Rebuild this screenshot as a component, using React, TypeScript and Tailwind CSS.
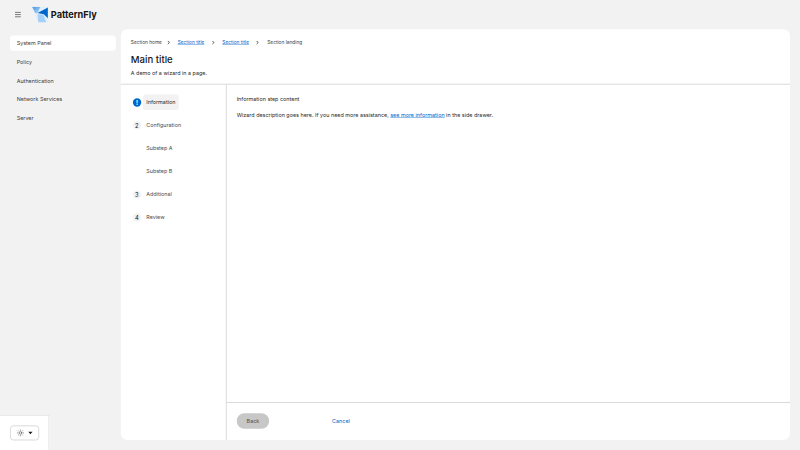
import { ChevronRight, Menu, Sun } from "lucide-react";

const NAV = ["System Panel", "Policy", "Authentication", "Network Services", "Server"];

const STEPS = [
  { num: "!", label: "Information", current: true },
  { num: "2", label: "Configuration" },
  { label: "Substep A" },
  { label: "Substep B" },
  { num: "3", label: "Additional" },
  { num: "4", label: "Review" },
];

function Logo() {
  return (
    <svg width="38" height="38" viewBox="0 0 38 38" className="shrink-0">
      <defs>
        <linearGradient id="pf-a" x1="0" y1="0" x2="1" y2="1">
          <stop offset="0" stopColor="#4394e5" />
          <stop offset="1" stopColor="#b9dafc" />
        </linearGradient>
      </defs>
      <path d="M0 0H38V38H14Z" fill="#e0f0ff" />
      <path d="M0 0H20L13 16H8Z" fill="url(#pf-a)" />
      <path d="M13 15L38 2V28L28 18Z" fill="#0066cc" />
      <path d="M13 18L27 19L34 38H15Z" fill="#a6d0f7" />
    </svg>
  );
}

function Step({ num, label, current }: { num?: string; label: string; current?: boolean }) {
  return (
    <div className="flex items-center h-[37px]">
      <div className="w-[29px] flex justify-center">
        {num &&
          (current ? (
            <span className="w-[20px] h-[20px] rounded-full bg-[#0066cc] text-white text-sm font-bold flex items-center justify-center leading-none">
              !
            </span>
          ) : (
            <span className="w-[20px] h-[20px] rounded-full bg-[#f2f2f2] text-[#151515] text-sm flex items-center justify-center leading-none">
              {num}
            </span>
          ))}
      </div>
      <span
        className={`h-[37px] flex items-center px-2 rounded-[6px] text-[13px] ${
          current ? "bg-[#f2f2f2] text-[#292929]" : "text-[#4d4d4d]"
        }`}
      >
        {label}
      </span>
    </div>
  );
}

export default function App() {
  return (
    <div className="w-[800px] h-[450px] overflow-hidden">
      <div className="w-[1920px] h-[1080px] origin-top-left scale-[0.416667] relative bg-[#f2f2f2] text-[#292929] font-['Inter',sans-serif] flex flex-col">
        <header className="h-[70px] shrink-0 flex items-center">
          <Menu size={18} strokeWidth={2} className="ml-[34px] text-[#333]" />
          <div className="ml-[25px] flex items-center gap-[7px]">
            <Logo />
            <span className="text-[22px] font-bold text-[#151515]">PatternFly</span>
          </div>
        </header>

        <div className="flex-1 flex min-h-0 pb-6 pr-6">
          <nav className="w-[290px] shrink-0 pl-6 pr-3 pt-[15px] flex flex-col gap-2">
            {NAV.map((item, i) => (
              <div
                key={item}
                className={`h-[37px] flex items-center px-4 rounded-lg text-[13px] text-[#3d3d3d] ${
                  i === 0 ? "bg-white" : ""
                }`}
              >
                {item}
              </div>
            ))}
          </nav>

          <main className="flex-1 bg-white rounded-2xl flex flex-col min-w-0">
            <div className="h-[133px] shrink-0 border-b-2 border-[#d2d2d2] px-6 pt-[24px]">
              <div className="flex items-center text-[11.5px] h-4 text-[#3d3d3d]">
                <span>Section home</span>
                <ChevronRight size={12} strokeWidth={3.5} className="ml-[10px] mr-4 text-[#151515]" />
                <span className="text-[#0066cc] underline">Section title</span>
                <ChevronRight size={12} strokeWidth={3.5} className="ml-[15px] mr-4 text-[#151515]" />
                <span className="text-[#0066cc] underline">Section title</span>
                <ChevronRight size={12} strokeWidth={3.5} className="ml-[15px] mr-[17px] text-[#151515]" />
                <span>Section landing</span>
              </div>
              <h1 className="text-[23px] font-medium leading-[30px] mt-[18px] text-[#151515]">Main title</h1>
              <p className="text-[13px] leading-[21px] mt-[6px]">A demo of a wizard in a page.</p>
            </div>

            <div className="flex-1 flex min-h-0">
              <aside className="w-[254px] shrink-0 border-r-2 border-[#d2d2d2] pl-6 pt-6 flex flex-col gap-[18.3px]">
                {STEPS.map((s) => (
                  <Step key={s.label} {...s} />
                ))}
              </aside>

              <div className="flex-1 flex flex-col min-w-0">
                <div className="flex-1 pl-6 pt-[25px] text-[13px]">
                  <p className="leading-[21px]">Information step content</p>
                  <p className="leading-[21px] mt-4">
                    Wizard description goes here. If you need more assistance,{" "}
                    <span className="text-[#0066cc] underline">see more information</span> in the side drawer.
                  </p>
                </div>
                <div className="h-[91px] shrink-0 border-t-2 border-[#d2d2d2] flex items-center pl-6 pb-[2px]">
                  <button type="button" className="w-[78px] h-[37px] rounded-full bg-[#c7c7c7] text-[13px] text-[#4d4d4d]">
                    Back
                  </button>
                  <span className="ml-[151px] text-[13px] text-[#0066cc]">Cancel</span>
                </div>
              </div>
            </div>
          </main>
        </div>

        <div className="absolute left-0 bottom-0 w-[118px] h-[84px] bg-white border-r-2 border-t-2 border-[#e6e6e6] flex items-center pl-6">
          <div className="w-[70px] h-[36px] rounded-lg border-2 border-[#d2d2d2] flex items-center pl-[14px] gap-[10px]">
            <Sun size={18} className="text-[#555]" />
            <span className="w-0 h-0 border-x-[5px] border-x-transparent border-t-[6px] border-t-[#151515]" />
          </div>
        </div>
      </div>
    </div>
  );
}
